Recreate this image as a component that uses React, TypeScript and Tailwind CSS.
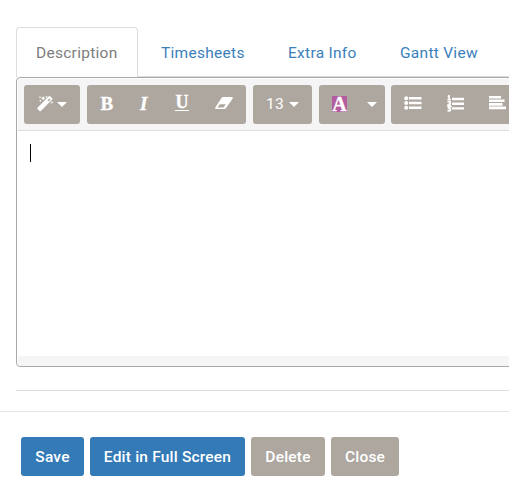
import type { ReactNode } from 'react';

function Caret({ className = '' }: { className?: string }) {
  return (
    <svg className={className} width="10" height="5" viewBox="0 0 10 5" fill="white">
      <path d="M0 0h10L5 5z" />
    </svg>
  );
}

function Wand() {
  return (
    <svg width="17" height="17" viewBox="0 0 17 17" fill="white">
      <path fillRule="evenodd" d="M.5 12.7 11.8 1.2q.7-.6 1.4 0l2 2q.6.6 0 1.3L3.9 15.9q-.7.5-1.4 0L.5 14q-.5-.6 0-1.3zM10.5 5.3l1.1 1.1 2-2.1-.9-.9z" />
      <path d="m3 .8.4 1 1 .4-1 .4-.4 1-.4-1-1-.4 1-.4zM6.2 1l.7 1.6 1.6.7-1.6.7-.7 1.6L5.5 4l-1.6-.7 1.6-.7zM9.6.6l.4 1 1 .4-1 .4-.4 1-.4-1-1-.4 1-.4zM3.3 4.4l.4 1 1 .4-1 .4-.4 1-.4-1-1-.4 1-.4zM14.9 6.1l.4 1 1 .4-1 .4-.4 1-.4-1-1-.4 1-.4z" />
    </svg>
  );
}

function Eraser() {
  return (
    <svg width="18" height="12" viewBox="0 0 18 12" fill="white">
      <path fillRule="evenodd" d="M7.9 0h8.8q1.7 0 1 1.5L11 11q-.7 1-1.9 1H1.3Q-.4 12 .3 10.5L6.5 1Q7 0 7.9 0zM8.5 10.4l2.3-3.2H4.8l-2.5 3.2z" />
    </svg>
  );
}

function ListIcon() {
  return (
    <svg width="18" height="14" viewBox="0 0 18 14" fill="white">
      <circle cx="2.2" cy="2.2" r="2" />
      <circle cx="2.2" cy="7" r="2" />
      <circle cx="2.2" cy="11.8" r="2" />
      <path d="M5 1h12.5v2.4H5zM5 5.8h12.5v2.4H5zM5 10.6h12.5V13H5z" />
    </svg>
  );
}

function NumberedIcon() {
  return (
    <svg width="17" height="17" viewBox="0 0 17 17" fill="none" stroke="white">
      <path strokeWidth="2.4" d="M5 4h12M5 8.7h12M5 13.4h12" />
      <path strokeWidth="1.6" d="M.7 1.6 2.1.8v4M.4 4.6h3.5M.5 6.7h2.7v1.6L.8 10.2H4M.5 11.9h2.9L2 13.5q1.6 0 1.6 1.3T.5 15.8" />
    </svg>
  );
}

function AlignIcon() {
  return (
    <svg width="18" height="14" viewBox="0 0 18 14" fill="white">
      <path d="M0 0h12v2.6H0zM0 3.5h15.5v2.6H0zM0 7.1h13.5v2.6H0zM0 10.6h17v2.6H0z" />
    </svg>
  );
}

function Group({ className, children }: { className: string; children: ReactNode }) {
  return <div className={`flex h-[39px] shrink-0 rounded-[3px] bg-[#aea79f] text-white ${className}`}>{children}</div>;
}

const glyph = "font-['Liberation_Serif',serif] leading-[20px] font-bold [-webkit-text-stroke:0.35px_white]";

export default function App() {
  return (
    <div className="h-[500px] w-[509px] overflow-hidden bg-white font-[Roboto,sans-serif] text-[15.5px]">
      <nav className="ml-4 flex h-[77px] items-end border-b border-[#ddd] tracking-[0.28px] text-[#3b80bb]">
        <div className="-mb-px flex h-[50px] w-[122px] shrink-0 items-center rounded-t-[4px] border border-b-0 border-[#ddd] bg-white pt-0.5 pl-[19px] text-[#7d7d7d]">Description</div>
        <div className="ml-[23px] flex h-[49px] w-[127px] shrink-0 items-center pt-[5px]">Timesheets</div>
        <div className="flex h-[49px] w-28 shrink-0 items-center pt-[5px]">Extra Info</div>
        <div className="flex h-[49px] shrink-0 items-center whitespace-nowrap pt-[5px]">Gantt View</div>
      </nav>
      <section className="ml-4 flex h-[290px] w-[520px] flex-col rounded-[4px] border border-[#a9a9a9] pt-px pl-px">
        <div className="flex h-[52px] shrink-0 gap-[7px] border-b border-[#ddd] bg-[#f5f5f5] pt-1.5 pl-1.5">
          <Group className="w-14 pt-2.5 pl-[13px]">
            <Wand />
            <Caret className="mt-[7px] ml-[3px]" />
          </Group>
          <Group className="w-[159px] pt-2">
            <span className={`${glyph} w-[53px] pl-[13.5px] pt-px text-[19px]`}>B</span>
            <span className={`${glyph} w-[34px] pt-px text-[19px] italic`}>I</span>
            <span className="w-[41px] pt-px pl-px">
              <span className={`${glyph} flex h-[17px] w-[14px] items-center justify-center border-b border-white text-[18px]`}>U</span>
            </span>
            <span className="mt-1"><Eraser /></span>
          </Group>
          <Group className="w-[59px] pl-[13px] pt-2">
            <span className="w-[18px] tracking-[0.3px]">13</span>
            <Caret className="mt-[9px] ml-[5px]" />
          </Group>
          <Group className="w-[66px] pt-[11px] pl-[13px]">
            <span className={`${glyph} flex h-4 w-[15px] items-center justify-center bg-[#b35c9f] pb-px text-[20px]`}>A</span>
            <Caret className="mt-1.5 ml-5" />
          </Group>
          <Group className="-ml-px w-[135px] pt-[11px] pl-[13px]">
            <span className="w-[43px]"><ListIcon /></span>
            <span className="-mt-px w-[42px]"><NumberedIcon /></span>
            <AlignIcon />
          </Group>
        </div>
        <div className="flex-1 pt-[13px] pl-3">
          <div className="h-[18px] w-px bg-black" />
        </div>
        <div className="h-2.5 shrink-0 rounded-b-[3px] bg-[#f5f5f5]" />
      </section>
      <hr className="mt-[23px] ml-4 border-[#ddd]" />
      <footer className="mt-5 flex gap-1.5 border-t border-[#e5e5e5] pt-[25px] pl-[21px] font-medium tracking-[0.2px] text-white">
        <button className="h-[39px] w-[63px] rounded-[3px] bg-[#337ab7] pt-0.5">Save</button>
        <button className="h-[39px] w-[155px] rounded-[3px] bg-[#337ab7] pt-0.5 whitespace-nowrap">Edit in Full Screen</button>
        <button className="h-[39px] w-[74px] rounded-[3px] bg-[#aea79f] pt-0.5">Delete</button>
        <button className="h-[39px] w-[68px] rounded-[3px] bg-[#aea79f] pt-0.5">Close</button>
      </footer>
    </div>
  );
}
